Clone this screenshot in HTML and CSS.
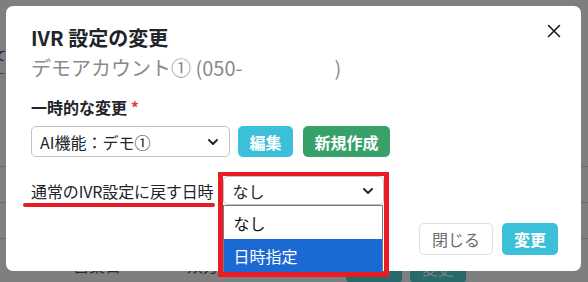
FILE: index.html
```html
<!DOCTYPE html>
<html lang="ja">
<head>
<meta charset="utf-8">
<title>IVR 設定の変更</title>
<link rel="stylesheet" href="styles.css">
</head>
<body>
<div class="page">
  <div class="page-notes">
    <p class="note note-blue">設定について</p>
    <p class="note note-orange">！注意</p>
  </div>
  <div class="page-table">
    <div class="page-row"></div>
    <div class="page-row"></div>
    <div class="page-row"></div>
    <div class="page-row page-row-last">
      <span class="cell">営業日</span>
      <span class="cell">双方向SMS</span>
      <span class="page-btn">詳細</span>
      <span class="page-btn">変更</span>
    </div>
  </div>
</div>

<div class="overlay"></div>

<div class="modal" role="dialog">
  <div class="modal-header">
    <div class="heading">
      <h5 class="title">IVR 設定の変更</h5>
      <div class="subtitle">デモアカウント① (050-<span class="masked"></span>)</div>
    </div>
    <button class="close" type="button" aria-label="閉じる">
      <svg width="14" height="14" viewBox="0 0 14 14"><path d="M1.5 1.5 L12.5 12.5 M12.5 1.5 L1.5 12.5" stroke="#1a1a1a" stroke-width="1.6" stroke-linecap="round" fill="none"/></svg>
    </button>
  </div>

  <div class="group">
    <div class="label">一時的な変更 <span class="req">*</span></div>
    <div class="row">
      <div class="select select-wide">
        <span>AI機能：デモ①</span>
        <svg class="chev" width="10" height="6" viewBox="0 0 10 6"><path d="M1 1 L5 5 L9 1" stroke="#222" stroke-width="1.8" fill="none" stroke-linecap="round" stroke-linejoin="round"/></svg>
      </div>
      <button class="btn btn-info" type="button">編集</button>
      <button class="btn btn-success" type="button">新規作成</button>
    </div>
  </div>

  <div class="row row-return">
    <div class="label-return">通常のIVR設定に戻す日時</div>
    <div class="select-wrap">
      <div class="select select-narrow">
        <span>なし</span>
        <svg class="chev" width="10" height="6" viewBox="0 0 10 6"><path d="M1 1 L5 5 L9 1" stroke="#222" stroke-width="1.8" fill="none" stroke-linecap="round" stroke-linejoin="round"/></svg>
      </div>
      <ul class="dropdown">
        <li class="option">なし</li>
        <li class="option option-active">日時指定</li>
      </ul>
      <div class="mark-box"></div>
    </div>
  </div>

  <div class="footer">
    <button class="btn btn-light" type="button">閉じる</button>
    <button class="btn btn-info" type="button">変更</button>
  </div>
</div>
</body>
</html>
```

FILE: styles.css
```css
html, body {
  margin: 0;
  padding: 0;
  height: 100%;
  overflow: hidden;
}

body {
  font-family: "Noto Sans CJK JP", "Noto Sans", sans-serif;
  background: #ffffff;
  color: #212529;
}

/* background page */
.page {
  height: 100%;
  display: flex;
  flex-direction: column;
}

.page-notes {
  padding-top: 48px;
  width: 6px;
  overflow: hidden;
}

.note {
  margin: 0;
  font-size: 12px;
  line-height: 16px;
  white-space: nowrap;
  display: flex;
  justify-content: flex-end;
}

.note-blue { color: #1f3f8c; }
.note-orange { color: #e06a10; margin-top: 6px; }

.page-table {
  margin-top: 57px;
}

.page-row {
  height: 35px;
  border-bottom: 1px solid #d4d4d4;
}

.page-row-last {
  border-bottom: none;
  height: auto;
  display: grid;
  grid-template-columns: 114px 159px 64px auto;
  padding: 15px 0 0 73px;
  font-size: 16px;
  line-height: 22px;
  color: #555;
}

.page-btn {
  display: inline-flex;
  align-items: center;
  justify-content: center;
  width: 56px;
  height: 28px;
  background: #50d2d9;
  color: #fff;
  border-radius: 3px;
}

.overlay {
  position: fixed;
  inset: 0;
  background: rgba(0, 0, 0, 0.5);
}

/* modal */
.modal {
  position: fixed;
  left: 6px;
  top: 6px;
  width: 575px;
  height: 265px;
  box-sizing: border-box;
  background: #fff;
  border-radius: 7px;
  padding: 20px 20px 16px 25px;
  display: flex;
  flex-direction: column;
}

.modal-header {
  display: flex;
  justify-content: space-between;
  align-items: flex-start;
}

.title {
  margin: 0;
  font-size: 20px;
  font-weight: 700;
  line-height: 24px;
  color: #212529;
}

.subtitle {
  margin-top: 6px;
  font-size: 20px;
  line-height: 24px;
  color: #8a8a8a;
  white-space: nowrap;
}

.masked {
  display: inline-block;
  width: 92px;
}

.close {
  margin-top: -2px;
  padding: 0;
  border: none;
  background: none;
  width: 14px;
  height: 14px;
  display: flex;
}

.group {
  margin-top: 17px;
}

.label {
  font-size: 16px;
  font-weight: 700;
  line-height: 20px;
  color: #212529;
}

.req {
  color: #e53e3e;
}

.row {
  display: flex;
  align-items: center;
  margin-top: 9px;
}

.select {
  box-sizing: border-box;
  display: flex;
  align-items: center;
  justify-content: space-between;
  background: #fff;
  border: 1px solid #c2c2c2;
  border-radius: 5px;
  font-size: 16px;
  color: #212529;
}

.select-wide {
  width: 199px;
  height: 31px;
  padding: 0 11px 0 8px;
}

.select-narrow {
  width: 161px;
  height: 29px;
  padding: 0 10px 0 9px;
}

.btn {
  box-sizing: border-box;
  height: 31px;
  padding: 0 11.5px;
  border: none;
  border-radius: 5px;
  font-family: inherit;
  font-size: 16px;
  font-weight: 700;
  color: #fff;
  display: inline-flex;
  align-items: center;
  justify-content: center;
}

.row .btn-info { margin-left: 8px; }
.row .btn-success { margin-left: 10px; }

.btn-info { background: #3cbfd9; }
.btn-success { background: #38a169; }

.row-return {
  margin-top: 19px;
  gap: 9px;
}

.label-return {
  position: relative;
  font-size: 16px;
  line-height: 20px;
  letter-spacing: -0.12px;
  color: #212529;
}

.label-return::after {
  content: "";
  position: absolute;
  left: -8px;
  right: -1px;
  bottom: -6px;
  height: 4px;
  border-radius: 2px;
  background: #e81c24;
}

.select-wrap {
  position: relative;
}

.dropdown {
  position: absolute;
  top: 100%;
  left: 0;
  width: 160px;
  margin: 0;
  padding: 0;
  list-style: none;
  background: #fff;
  border: 1px solid #7a7a7a;
  box-sizing: border-box;
  z-index: 2;
}

.option {
  height: 33px;
  display: flex;
  align-items: center;
  padding-left: 10px;
  font-size: 16px;
  color: #111;
}

.option-active {
  background: #1b69d3;
  color: #fff;
}

.mark-box {
  position: absolute;
  left: -5px;
  top: -4px;
  width: 171px;
  height: 105px;
  box-sizing: border-box;
  border-style: solid;
  border-color: #e81c24;
  border-width: 4px 5px 5px 5px;
  z-index: 3;
  pointer-events: none;
}

.footer {
  margin-top: auto;
  display: flex;
  justify-content: flex-end;
  gap: 9px;
  padding-right: 3px;
}

.footer .btn {
  height: 32px;
  padding: 0 12px;
}

.btn-light {
  background: #fff;
  border: 1px solid #d9e2ec;
  color: #6c6c6c;
  font-weight: 400;
}
```
